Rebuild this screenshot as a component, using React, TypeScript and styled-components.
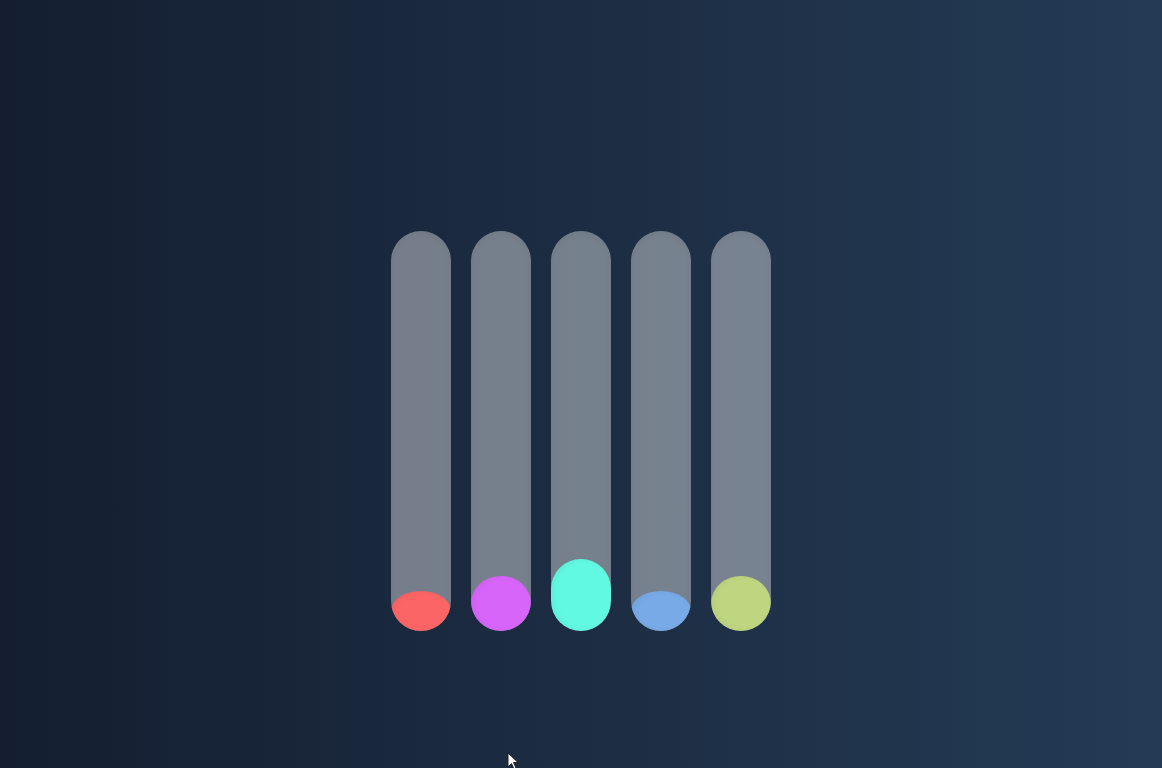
import React from 'react';
import styled, { createGlobalStyle } from 'styled-components';

// STYLES

const GlobalStyle = createGlobalStyle`
    html, body {
        margin: 0;
        padding: 0;
    }
    body {
        min-height: 100vh;
        background: linear-gradient(to right, #141e30, #243b55);
        font-family: "Liberation Sans", Arial, sans-serif;
        overflow: hidden;
    }
`
const Page = styled.div`
    width: 100vw;
    height: 100vh;
    display: flex;
    justify-content: center;
    align-items: flex-start;
    padding-top: 231px;
    box-sizing: border-box;
    position: relative;
`
const Equalizer = styled.div`
    display: flex;
    gap: 20px;
`
const Tube = styled.div`
    width: 60px;
    height: 400px;
    border-radius: 30px;
    background-color: rgba(255, 255, 255, 0.4);
    box-shadow: inset 0 2px 6px rgba(0, 0, 0, 0.06);
    overflow: hidden;
    display: flex;
    flex-direction: column;
    justify-content: flex-end;
`
const Level = styled.div<{ $color: string }>`
    width: 100%;
    border-radius: 30px / min(30px, 50%);
    background-color: ${p => p.$color};
    box-shadow: inset 3px 0 6px rgba(0, 0, 0, 0.05);
`
const Pointer = styled.svg`
    position: absolute;
    left: 507px;
    top: 752px;
    width: 13px;
    height: 18px;
`
////////////////////////////////////////////////////////////////////////////////

const bars = [
    { color: '#fc6565', level: 40 },
    { color: '#d865fa', level: 55 },
    { color: '#62f9e1', level: 72 },
    { color: '#78aae8', level: 40 },
    { color: '#bfd680', level: 55 },
]

export default function App() {
    return (
        <>
            <GlobalStyle />
            <Page>
                <Equalizer>
                    {bars.map((b, i) => (
                        <Tube key={i}>
                            <Level $color={b.color} style={{ height: b.level }} />
                        </Tube>
                    ))}
                </Equalizer>
                <Pointer viewBox="0 0 13 18">
                    <path d="M1 1 L1 15 L4.5 11.5 L7 17 L9 16 L6.5 10.5 L11 10.5 Z" fill="#fff" stroke="#222" strokeWidth="1" />
                </Pointer>
            </Page>
        </>
    )
}
